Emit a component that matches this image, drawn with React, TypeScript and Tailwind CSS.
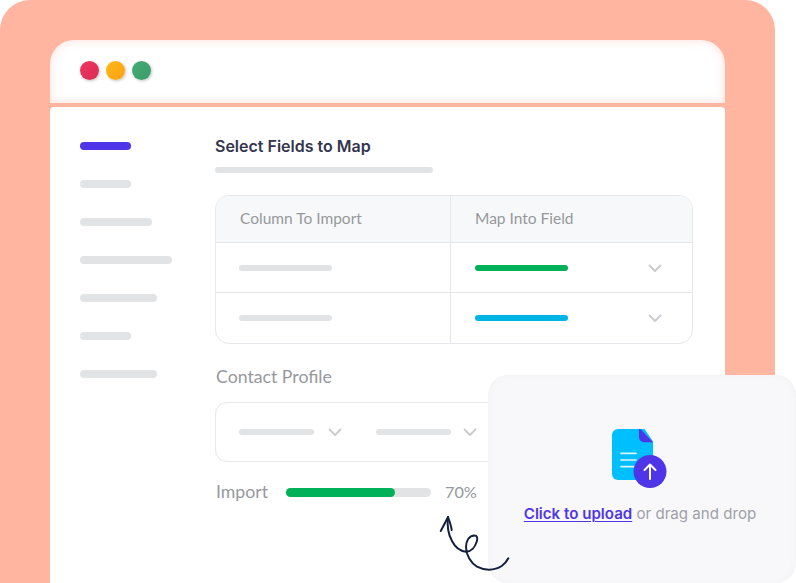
import React from 'react';

const sidebarWidths = ['w-[51px]', 'w-[72px]', 'w-[92px]', 'w-[77px]', 'w-[51px]', 'w-[77px]'];

const Chevron = () => (
  <svg width="16" height="10" viewBox="0 0 16 10" fill="none" stroke="#c9cbd0" strokeWidth="1.8" strokeLinecap="round" strokeLinejoin="round">
    <path d="M2.500 2.500L8 8l5.500-5.500" />
  </svg>
);

const FileUploadIcon = () => (
  <svg width="56" height="62" viewBox="0 0 56 62" fill="none">
    <path d="M6 1h26.5L41 13.5V46a6 6 0 0 1-6 6H6a6 6 0 0 1-6-6V7a6 6 0 0 1 6-6z" fill="#00bfff" />
    <path d="M27 1h1.500L41 14.300h-9a5 5 0 0 1-5-5z" fill="#4f35e8" />
    <path d="M9 25.300h15M9 32h15M9 38.700h15" stroke="#fff" strokeOpacity="0.85" strokeWidth="1.700" strokeLinecap="round" />
    <circle cx="38" cy="43.500" r="16.500" fill="#4f35e8" />
    <path d="M38 51V36.500M32.500 42l5.500-5.500 5.500 5.500" stroke="#fff" strokeWidth="2" strokeLinecap="round" strokeLinejoin="round" />
  </svg>
);

const CurlyArrow = () => (
  <svg className="absolute left-[438px] top-[514px]" width="74" height="60" viewBox="0 0 74 60" fill="none" stroke="#14213d" strokeWidth="2" strokeLinecap="round" strokeLinejoin="round">
    <path d="M10 3C9 12 10 20 14 27C17 33 22 37 28 37.700C33 37.700 37 33 38.700 27.700C40 24 39 21.500 36.500 21.500C31 21.500 28 27 28 33C28 41 33 49 39 52.700C46 56.500 56 57 63.700 52C66.500 50 69 47 70.300 44.300" />
    <path d="M2.700 17C5.500 12 8 7 10 3C11.500 7 13 11 13.700 16" />
  </svg>
);

export default function App() {
  return (
    <div className="relative h-[583px] w-[796px] overflow-hidden bg-white font-['Inter',sans-serif]">
      <div className="flex h-full w-[775px] flex-col gap-[4px] rounded-tl-[30px] rounded-tr-[30px] bg-[#ffb59f] px-[50px] pt-[40px]">
        {/* window title bar */}
        <div className="flex h-[63px] shrink-0 items-center gap-[7px] rounded-t-[24px] bg-white pb-[3px] pl-[30px] shadow-[inset_0_0_10px_rgba(255,181,159,0.45)]">
          <span className="h-[19px] w-[19px] rounded-full bg-[linear-gradient(135deg,#f0355f,#d92c55)] shadow-[1px_1px_3px_rgba(0,0,0,0.25)]" />
          <span className="h-[19px] w-[19px] rounded-full bg-[linear-gradient(135deg,#ffb914,#ff9f14)] shadow-[1px_1px_3px_rgba(0,0,0,0.25)]" />
          <span className="h-[19px] w-[19px] rounded-full bg-[linear-gradient(135deg,#46ad74,#3a9a66)] shadow-[1px_1px_3px_rgba(0,0,0,0.25)]" />
        </div>

        {/* window body */}
        <div className="flex flex-1 rounded-t-[4px] bg-white pl-[30px] pt-[29px]">
          <div className="flex w-[135px] shrink-0 flex-col gap-[30px] pt-[6px]">
            <div className="h-[8px] w-[51px] rounded-full bg-[#4f35e8]" />
            {sidebarWidths.map((w, i) => (
              <div key={i} className={`h-[8px] rounded-full bg-[#e2e3e5] ${w}`} />
            ))}
          </div>

          <div className="w-[478px]">
            <h2 className="text-[16px] font-semibold leading-[20px] text-[#35354f]">Select Fields to Map</h2>
            <div className="mt-[11px] h-[6px] w-[218px] rounded-full bg-[#e2e3e5]" />

            <div className="mt-[22px] overflow-hidden rounded-[14px] border border-[#e6e7ea] font-['Lato',sans-serif]">
              <div className="grid h-[46px] grid-cols-[234px_1fr] bg-[#f7f8f9] text-[15.500px] text-[#96989d]">
                <div className="flex items-center pl-[24px]">Column To Import</div>
                <div className="flex items-center border-l border-[#e6e7ea] pl-[24px]">Map Into Field</div>
              </div>
              <div className="grid h-[50px] grid-cols-[234px_1fr] border-t border-[#e6e7ea]">
                <div className="flex items-center pl-[23px]">
                  <div className="h-[6px] w-[93px] rounded-full bg-[#e2e3e5]" />
                </div>
                <div className="flex items-center justify-between border-l border-[#e6e7ea] pl-[24px] pr-[29px]">
                  <div className="h-[6px] w-[93px] rounded-full bg-[#00b159]" />
                  <Chevron />
                </div>
              </div>
              <div className="grid h-[51px] grid-cols-[234px_1fr] border-t border-[#e6e7ea]">
                <div className="flex items-center pl-[23px]">
                  <div className="h-[6px] w-[93px] rounded-full bg-[#e2e3e5]" />
                </div>
                <div className="flex items-center justify-between border-l border-[#e6e7ea] pl-[24px] pr-[29px]">
                  <div className="h-[6px] w-[93px] rounded-full bg-[#00b4e6]" />
                  <Chevron />
                </div>
              </div>
            </div>

            <div className="mt-[23px] pl-[1px] font-['Lato',sans-serif] text-[17.700px] leading-[20px] text-[#96989d]">Contact Profile</div>

            <div className="mt-[15px] flex h-[60px] items-center rounded-[12px] border border-[#e6e7ea] pl-[23px]">
              <div className="h-[6px] w-[75px] rounded-full bg-[#e2e3e5]" />
              <span className="ml-[13px]"><Chevron /></span>
              <div className="ml-[33px] h-[6px] w-[75px] rounded-full bg-[#e2e3e5]" />
              <span className="ml-[11px]"><Chevron /></span>
            </div>

            <div className="mt-[19px] flex items-center font-['Lato',sans-serif] text-[17.700px] leading-[22px] text-[#96989d]">
              <span className="w-[71px] pl-[1px]">Import</span>
              <div className="h-[9px] w-[145px] rounded-full bg-[#e2e3e5]">
                <div className="h-full w-[109px] rounded-full bg-[#00b159]" />
              </div>
              <span className="ml-[14px] text-[16.200px]">70%</span>
            </div>
          </div>
        </div>
      </div>

      {/* upload card overlay */}
      <div className="absolute left-[488px] top-[375px] flex h-[208px] w-[308px] flex-col items-center rounded-[20px] bg-[#f8f8fb] pr-[4px] pt-[53px] shadow-[inset_0_0_8px_rgba(0,0,0,0.03)]">
        <FileUploadIcon />
        <p className="mt-[13px] whitespace-nowrap text-[15.100px] leading-[22px] text-[#9fa0a8]">
          <span className="font-semibold text-[#4f35e8] underline decoration-1 underline-offset-2">Click to upload</span> or drag and drop
        </p>
      </div>

      <CurlyArrow />
    </div>
  );
}
